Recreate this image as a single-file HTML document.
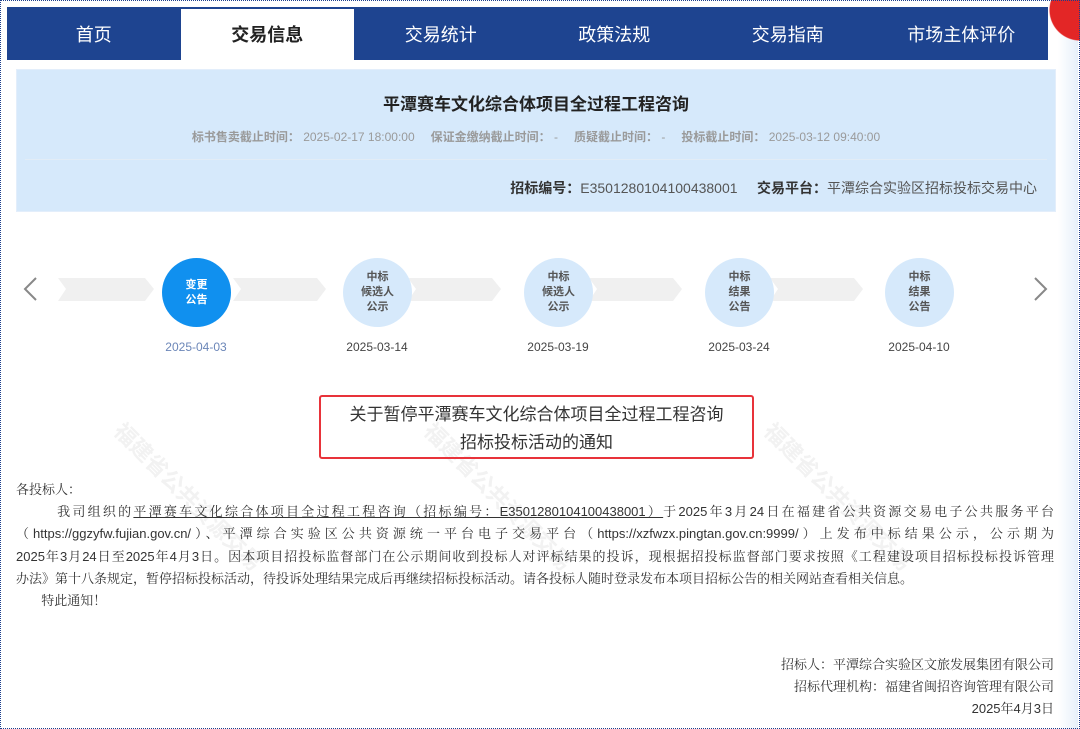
<!DOCTYPE html>
<html><head><meta charset="utf-8"><style>
*{margin:0;padding:0;box-sizing:border-box}
body{width:1080px;height:729px;overflow:hidden;background:#fff;position:relative;font-family:"Liberation Sans","Noto Sans CJK SC",sans-serif;color:#333}
.frame{position:absolute;left:0;top:0;width:1080px;height:729px;border:1px dotted #1c3f8c}
.rstrip{position:absolute;left:1058px;top:0;width:20px;height:729px;background:linear-gradient(90deg,#fff,#e6f0fa)}
.red{position:absolute;left:1040px;top:0;width:40px;height:50px;background:radial-gradient(circle at 40px 10px,#e32626 30px,transparent 31px)}
.nav{position:absolute;left:7px;top:7px;width:1041px;height:53px;background:#1e4490;display:flex}
.nav div{flex:1;color:#fff;font-size:18px;text-align:center;line-height:56px}
.nav div.on{background:#fff;color:#222;margin-top:2px;line-height:52px;font-weight:bold}
.info{position:absolute;left:16px;top:69px;width:1040px;height:143px;background:#d6e9fb;border:1px solid #e3eefb}
.title{position:absolute;top:20px;width:100%;text-align:center;font-size:17px;font-weight:bold;color:#222}
.meta{position:absolute;top:58px;left:0;width:100%;text-align:center;font-size:12px;color:#9a9a9a}
.meta span{margin:0 8px}
.meta b{color:#9a9a9a}
.hr{position:absolute;left:8px;right:8px;top:89px;border-top:1px solid #e2ecf6}
.row2{position:absolute;right:18px;top:108px;font-size:14px;color:#555}
.row2 b{color:#333}
.circ{position:absolute;width:69px;height:69px;border-radius:50%;background:#d6e9fb;color:#555;font-size:11px;font-weight:bold;text-align:center;display:flex;align-items:center;justify-content:center;line-height:15px}
.circ.on{background:#1090ef;color:#fff}
.date{position:absolute;top:340px;font-size:12px;color:#444;width:100px;text-align:center}
.box{position:absolute;left:319px;top:395px;width:435px;height:64px;border:2px solid #e8333a;border-radius:3px;text-align:center;font-size:17px;color:#333;line-height:28px;padding-top:4px}
.body{position:absolute;left:16px;top:479px;width:1038px;font-size:13px;color:#333;line-height:22.2px;font-family:"Liberation Sans","Noto Serif CJK SC",serif}
.l{text-align:justify;text-align-last:justify;white-space:nowrap}
.sig{position:absolute;right:26px;top:654px;text-align:right;font-size:13px;line-height:22px;color:#333;font-family:"Liberation Sans","Noto Serif CJK SC",serif}
.wm{position:absolute;font-size:22px;color:#f2f2f2;font-weight:bold;transform:rotate(45deg);white-space:nowrap}
</style></head><body>
<div class="rstrip"></div><div class="red"></div>
<div class="nav"><div>首页</div><div class="on">交易信息</div><div>交易统计</div><div>政策法规</div><div>交易指南</div><div>市场主体评价</div></div>
<div class="info">
<div class="title">平潭赛车文化综合体项目全过程工程咨询</div>
<div class="meta"><span><b>标书售卖截止时间：</b> 2025-02-17 18:00:00</span><span><b>保证金缴纳截止时间：</b> -</span><span><b>质疑截止时间：</b> -</span><span><b>投标截止时间：</b> 2025-03-12 09:40:00</span></div>
<div class="hr"></div>
<div class="row2"><b>招标编号：</b>E3501280104100438001 &nbsp;&nbsp;&nbsp;&nbsp;<b>交易平台：</b>平潭综合实验区招标投标交易中心</div>
</div>
<div class="wm" style="left:90px;top:480px">福建省公共资源交易</div>
<div class="wm" style="left:400px;top:480px">福建省公共资源交易</div>
<div class="wm" style="left:740px;top:480px">福建省公共资源交易</div>
<svg style="position:absolute;left:0;top:0" width="1080" height="340">
<polyline points="36,278 25,289 36,300" fill="none" stroke="#888" stroke-width="2"/>
<polyline points="1035,278 1046,289 1035,300" fill="none" stroke="#888" stroke-width="2"/>
<g fill="#f0f0f0">
<polygon points="58,278 145,278 154,289 145,301 58,301 66,289"/>
<polygon points="233,278 317,278 326,289 317,301 233,301 241,289"/>
<polygon points="408,278 492,278 501,289 492,301 408,301 416,289"/>
<polygon points="589,278 673,278 682,289 673,301 589,301 597,289"/>
<polygon points="770,278 854,278 863,289 854,301 770,301 778,289"/>
</g></svg>
<div class="circ on" style="left:162px;top:258px">变更<br>公告</div>
<div class="circ" style="left:343px;top:258px">中标<br>候选人<br>公示</div>
<div class="circ" style="left:524px;top:258px">中标<br>候选人<br>公示</div>
<div class="circ" style="left:705px;top:258px">中标<br>结果<br>公告</div>
<div class="circ" style="left:885px;top:258px">中标<br>结果<br>公告</div>
<div class="date" style="left:146px;color:#6b86b8">2025-04-03</div>
<div class="date" style="left:327px">2025-03-14</div>
<div class="date" style="left:508px">2025-03-19</div>
<div class="date" style="left:689px">2025-03-24</div>
<div class="date" style="left:869px">2025-04-10</div>
<div class="box">关于暂停平潭赛车文化综合体项目全过程工程咨询<br>招标投标活动的通知</div>
<div class="body">
<div>各投标人：</div>
<div class="l">&nbsp;&nbsp;&nbsp;&nbsp;&nbsp;&nbsp;&nbsp;我司组织的<u>平潭赛车文化综合体项目全过程工程咨询（招标编号：E3501280104100438001）</u>于2025年3月24日在福建省公共资源交易电子公共服务平台</div>
<div class="l">（https://ggzyfw.fujian.gov.cn/）、平潭综合实验区公共资源统一平台电子交易平台（https://xzfwzx.pingtan.gov.cn:9999/）上发布中标结果公示，公示期为</div>
<div class="l">2025年3月24日至2025年4月3日。因本项目招投标监督部门在公示期间收到投标人对评标结果的投诉，现根据招投标监督部门要求按照《工程建设项目招标投标投诉管理</div>
<div>办法》第十八条规定，暂停招标投标活动，待投诉处理结果完成后再继续招标投标活动。请各投标人随时登录发布本项目招标公告的相关网站查看相关信息。</div>
<div>&nbsp;&nbsp;&nbsp;&nbsp;&nbsp;&nbsp;&nbsp;特此通知！</div>
</div>
<div class="sig">招标人：平潭综合实验区文旅发展集团有限公司<br>招标代理机构：福建省闽招咨询管理有限公司<br>2025年4月3日</div>
<div class="frame"></div>
</body></html>
